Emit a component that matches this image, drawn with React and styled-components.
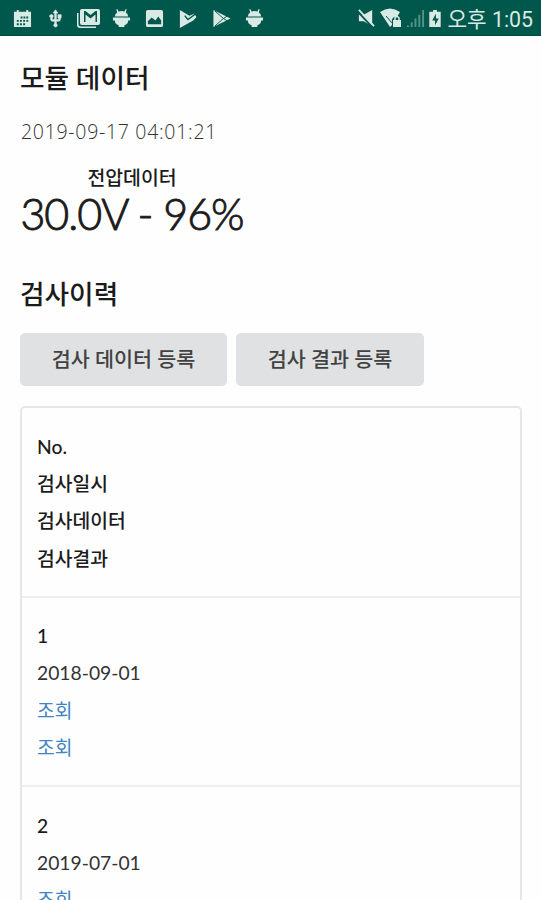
import React from 'react'
import styled, { createGlobalStyle } from 'styled-components'

const records = [
    { no: '1', date: '2018-09-01' },
    { no: '2', date: '2019-07-01' },
]

const App = () => {
    return (
        <Screen>
            <GlobalStyle />
            <StatusBar>
                <Notifications>
                    <CalendarIcon />
                    <UsbIcon />
                    <MailIcon />
                    <RobotIcon />
                    <ImageIcon />
                    <PlayCheckIcon />
                    <PlayIcon />
                    <RobotIcon />
                </Notifications>
                <SystemIcons>
                    <MuteIcon />
                    <WifiIcon />
                    <SignalIcon />
                    <BatteryIcon />
                    <Clock>오후 1:05</Clock>
                </SystemIcons>
            </StatusBar>
            <Content>
                <Title>모듈 데이터</Title>
                <Timestamp>2019-09-17 04:01:21</Timestamp>
                <Statistic>
                    <StatLabel>전압데이터</StatLabel>
                    <StatValue>30.0V - 96%</StatValue>
                </Statistic>
                <Title>검사이력</Title>
                <Buttons>
                    <Button $width="207px">검사 데이터 등록</Button>
                    <Button $width="188px">검사 결과 등록</Button>
                </Buttons>
                <Table>
                    <Row>
                        <Cell $bold>No.</Cell>
                        <Cell $bold>검사일시</Cell>
                        <Cell $bold>검사데이터</Cell>
                        <Cell $bold>검사결과</Cell>
                    </Row>
                    {records.map((item) => (
                        <Row key={item.no}>
                            <Cell $bold>{item.no}</Cell>
                            <Cell>{item.date}</Cell>
                            <Cell><Link>조회</Link></Cell>
                            <Cell><Link>조회</Link></Cell>
                        </Row>
                    ))}
                </Table>
            </Content>
        </Screen>
    )
}

const CalendarIcon = () => (
    <Icon viewBox="0 0 20 20">
        <path fillRule="evenodd" d="M1 3h3V1h2v2h8V1h2v2h3v16H1zM8 8v2h2V8zm3 0v2h2V8zm3 0v2h2V8zM4 11.5v2h2v-2zm3.300 0v2h2v-2zm3.400 0v2h2v-2zm3.300 0v2h2v-2zM4 15v2h2v-2zm3.300 0v2h2v-2zm3.400 0v2h2v-2z" />
    </Icon>
)

const UsbIcon = () => (
    <Icon viewBox="2 0 20 23.500">
        <path stroke="#d9eae5" strokeWidth=".8" d="M15 7v4h1v2h-3V5h2l-3-4-3 4h2v8H8v-2.070c.7-.37 1.200-1.080 1.200-1.930 0-1.210-.99-2.200-2.200-2.200S4.800 7.790 4.800 9c0 .85.5 1.560 1.200 1.930V13c0 1.110.89 2 2 2h3v3.050c-.71.37-1.200 1.100-1.200 1.950a2.200 2.200 0 0 0 4.400 0c0-.85-.49-1.580-1.200-1.950V15h3c1.110 0 2-.89 2-2v-2h1V7h-4z" />
    </Icon>
)

const MailIcon = () => (
    <Icon viewBox="0 0 25 21" $width="25px" $height="21px">
        <path d="M1 5v12q0 3 3 3h16v-1.500H5q-2.500 0-2.500-2.500V5z" />
        <path fillRule="evenodd" d="M6 1h16q2 0 2 2v12q0 2-2 2H6q-2 0-2-2V3q0-2 2-2zm2 2v11h1.500V6.500l5 4 5-4V14H21V3h-1.500l-5 4-5-4z" />
    </Icon>
)

const RobotIcon = () => (
    <Icon viewBox="0 0 20 20">
        <path d="M5.500 0 7 2.500q3-1 6 0L14.500 0l1 .6-1 2.700Q17 5 17 8H3q0-3 2.500-4.700L4.500.6zM1 9h18v3h-2q0 4-4 5v2H7v-2q-4-1-4-5H1z" />
    </Icon>
)

const ImageIcon = () => (
    <Icon viewBox="0 0 20 20">
        <path fillRule="evenodd" d="M3 1h14q2 0 2 2v14q0 2-2 2H3q-2 0-2-2V3q0-2 2-2zm0 15h14v-4l-3-4-3 4-4-3-4 4z" />
    </Icon>
)

const PlayCheckIcon = () => (
    <Icon viewBox="0 0 20 20">
        <path d="M2 1l10 6 5-2 2.500 3.500L16 12 2 20z" />
        <path d="M7 7l3.500 4L18 5.500" fill="none" stroke="#00574b" strokeWidth="1.500" />
    </Icon>
)

const PlayIcon = () => (
    <Icon viewBox="0 0 20 20">
        <path d="M1.500 1l18 9-18 9z" />
        <path d="M3 2l9 8-9 8M12 10l4-2.500M12 10l4 2.500" fill="none" stroke="#00574b" strokeWidth="1" />
    </Icon>
)

const MuteIcon = () => (
    <Icon viewBox="0 0 20 20">
        <path d="M2 6h5l9-5v17l-9-5H2z" />
        <path d="M1 3l17 18" stroke="#00574b" strokeWidth="2" />
        <path d="M2 1l16 17" stroke="#d9eae5" strokeWidth="1.800" />
    </Icon>
)

const WifiIcon = () => (
    <Icon viewBox="0 0 22 20" $width="22px" $height="20px">
        <path d="M0 4q10-7 20 0l-3 5q-4-1-5 3v5l-2 2z" />
        <path d="M6 8l7 8" stroke="#00574b" strokeWidth="1" />
        <path d="M13 12h8v7h-8z" />
        <path d="M15 12v-2q2-3 4 0v2" fill="none" stroke="#d9eae5" strokeWidth="1.500" />
    </Icon>
)

const SignalIcon = () => (
    <Icon viewBox="0 0 20 20" $width="19px">
        <path opacity=".4" d="M1 17h2v2H1zm4-3h2v5H5zm4-4h2v9H9zm4-4h2v13h-2zm4-5h2v18h-2z" />
    </Icon>
)

const BatteryIcon = () => (
    <Icon viewBox="0 0 12 20" $width="12px">
        <path fillRule="evenodd" d="M4 1h4v2h4v16H0V3h4zm3 4-4 7h3v5l4-7H7z" />
    </Icon>
)

const GlobalStyle = createGlobalStyle`
    * {
        box-sizing: border-box;
    }
    body {
        margin: 0;
        overflow: hidden;
    }
`

const Screen = styled.div`
    height: 900px;
    overflow: hidden;
    background: #fefefe;
    color: #1b1b1b;
    font-family: Lato, "Noto Sans CJK KR", sans-serif;
`

const StatusBar = styled.header`
    display: flex;
    justify-content: space-between;
    height: 36px;
    padding: 1px 7px 0 13px;
    background: #00574b;
    border-bottom: 1px solid #004b40;
`

const Notifications = styled.div`
    display: flex;
    align-items: center;
    gap: 14.100px;

    /* the stacked mail icon is wider than the others */
    svg:nth-child(3) {
        margin: 0 -3px;
    }
`

const SystemIcons = styled.div`
    display: flex;
    align-items: center;
    gap: 4px;
`

const Icon = styled.svg`
    flex: none;
    width: ${(props) => props.$width || '19px'};
    height: ${(props) => props.$height || '19px'};
    fill: #d9eae5;
`

const Clock = styled.span`
    margin: 0 1px 0 2px;
    padding-top: 3px;
    color: #d9eae5;
    font-family: Roboto, "Noto Sans CJK KR", sans-serif;
    font-size: 21.300px;
    line-height: 34px;
    white-space: nowrap;
`

const Content = styled.main`
    padding: 25px 19px 0 20px;
`

const Title = styled.h3`
    margin: 0;
    font-size: 26.700px;
    font-weight: 500;
    line-height: 34px;
    white-space: nowrap;
`

const Timestamp = styled.p`
    margin: 20px 0 0 1px;
    color: #333;
    font-family: "Open Sans", sans-serif;
    font-size: 19.500px;
    font-weight: 300;
    line-height: 34px;
    letter-spacing: 0.700px;
`

const Statistic = styled.div`
    display: flex;
    flex-direction: column;
    align-items: center;
    width: 224px;
    margin: 17px 0 39px;
`

const StatLabel = styled.div`
    font-size: 19.400px;
    font-weight: 500;
    line-height: 24px;
`

const StatValue = styled.div`
    font-size: 43px;
    font-weight: 300;
    line-height: 48px;
    letter-spacing: -1px;
    white-space: nowrap;
    -webkit-text-stroke: 0.900px #1b1b1b;
`

const Buttons = styled.div`
    display: flex;
    gap: 9px;
    margin-top: 22px;
`

const Button = styled.button`
    width: ${(props) => props.$width};
    height: 53px;
    padding: 0 0 3px;
    border: 0;
    border-radius: 5px;
    background: #dfe1e2;
    color: #414141;
    font-family: inherit;
    font-size: 20.700px;
    font-weight: 500;
    white-space: nowrap;
`

const Table = styled.div`
    margin-top: 20px;
    border: 2px solid #e6e6e7;
    border-radius: 5px;
`

const Row = styled.div`
    padding: 19.500px 15px 18.500px;
    border-bottom: 2px solid #eeeeef;
`

const Cell = styled.div`
    height: 37.400px;
    color: ${(props) => (props.$bold ? '#1b1b1b' : '#333')};
    font-size: 19.300px;
    font-weight: ${(props) => (props.$bold ? 500 : 400)};
    line-height: 38px;
`

const Link = styled.a`
    color: #4183c4;
`

export default App
